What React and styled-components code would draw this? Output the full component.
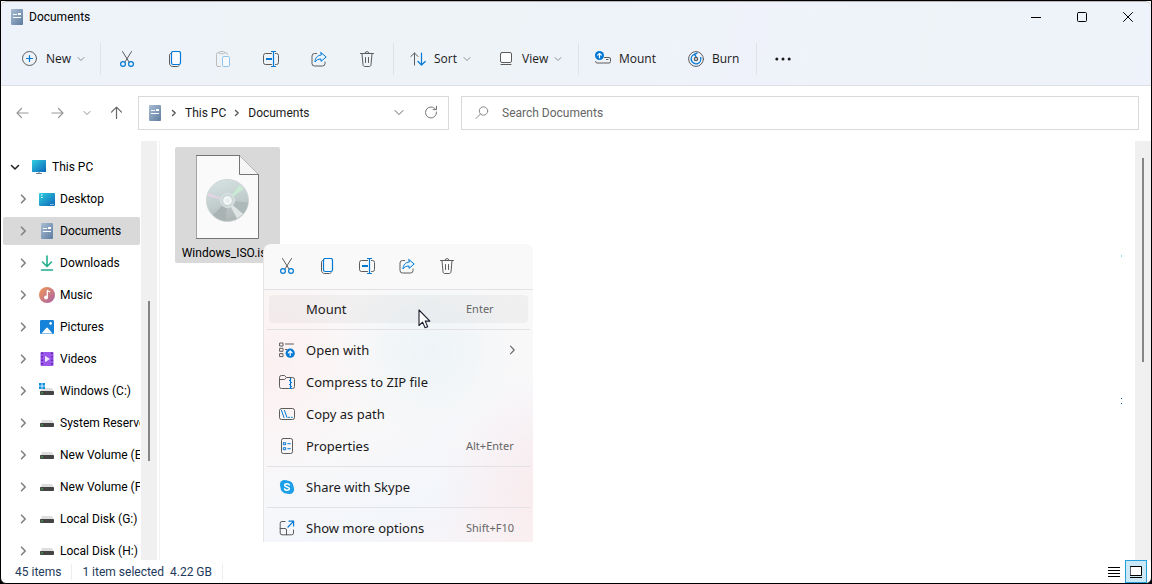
import React from "react";
import styled, { createGlobalStyle, css } from "styled-components";

const GlobalStyle = createGlobalStyle`
  * {
    box-sizing: border-box;
  }

  body {
    margin: 0;
    background: #000;
    color: #000;
    font-family: Roboto, "Open Sans", sans-serif;
    font-size: 12px;
    line-height: 16px;
  }

  button,
  input {
    margin: 0;
    padding: 0;
    border: 0;
    background: none;
    color: inherit;
    font: inherit;
  }
`;

/* ---------- icons ---------- */

const Svg = ({ w = 16, h = 16, children }) => (
  <svg
    width={w}
    height={h}
    viewBox={`0 0 ${w} ${h}`}
    fill="none"
    stroke="#5c5c5c"
    strokeLinecap="round"
    strokeLinejoin="round"
    aria-hidden="true"
  >
    {children}
  </svg>
);

const BLUE = "#0078d4";

const ChevronDown = () => (
  <Svg w={8} h={8}>
    <path d="M1 2.5 4 5.5 7 2.5" stroke="#8f8f8f" />
  </Svg>
);

const ChevronRight = ({ color = "#808080", width = 1.6 }) => (
  <Svg w={8} h={10}>
    <path d="M2.5 1.2 6.2 5 2.5 8.8" stroke={color} strokeWidth={width} />
  </Svg>
);

const CrumbChevron = () => (
  <Svg w={6} h={8}>
    <path d="M1.5 1.5 4.2 4 1.5 6.5" stroke="#555" strokeWidth="1.4" />
  </Svg>
);

const DocIcon = () => (
  <Svg>
    <defs>
      <linearGradient id="doc" x1="0" y1="0" x2="1" y2="1">
        <stop offset="0" stopColor="#a9bdd4" />
        <stop offset="1" stopColor="#5d7c9f" />
      </linearGradient>
    </defs>
    <rect x="2" y="0" width="12" height="16" rx="1" fill="url(#doc)" stroke="none" />
    <path d="M4 5.5h4M4 8.5h8" stroke="#fff" strokeWidth="1.2" strokeLinecap="butt" />
    <rect x="9" y="4" width="3" height="2" fill="#fff" stroke="none" />
  </Svg>
);

const NewIcon = () => (
  <Svg>
    <circle cx="7.5" cy="7.5" r="7" />
    <path d="M7.5 4.5v6M4.5 7.5h6" stroke={BLUE} strokeWidth="1.2" />
  </Svg>
);

const CutIcon = () => (
  <Svg>
    <path d="M3.5 .5 10 11M12.5 .5 6 11" />
    <circle cx="4" cy="13" r="2.4" stroke={BLUE} strokeWidth="1.2" />
    <circle cx="12" cy="13" r="2.4" stroke={BLUE} strokeWidth="1.2" />
  </Svg>
);

const CopyIcon = () => (
  <Svg>
    <path d="M3.6 2.5c-.7.2-1.1.8-1.1 1.6V12c0 2.2 1.2 3.5 3.4 3.5h4.6c.7 0 1.3-.3 1.6-.9" />
    <rect x="4.5" y=".5" width="9" height="13" rx="1.8" fill="#f7fbfe" stroke={BLUE} strokeWidth="1.2" />
  </Svg>
);

const PasteIcon = () => (
  <Svg>
    <path d="M5.5 15.5H3a1.5 1.5 0 0 1-1.5-1.5V3.3A1.5 1.5 0 0 1 3 1.8h1.5M9.5 1.8H11a1.5 1.5 0 0 1 1.5 1.5" stroke="#bcbcbc" />
    <rect x="4.5" y=".5" width="5" height="2.2" rx="1" stroke="#bcbcbc" />
    <rect x="7.5" y="5.5" width="7" height="10" rx="1.2" fill="#f6faff" stroke="#90c4ee" />
  </Svg>
);

const RenameIcon = () => (
  <Svg>
    <path d="M8.5 2.5h-6a2 2 0 0 0-2 2v7a2 2 0 0 0 2 2h6M12.5 2.5h1a2 2 0 0 1 2 2v7a2 2 0 0 1-2 2h-1" />
    <path d="M8.5 .5h4M8.5 15.5h4M10.5 .5v15" stroke={BLUE} strokeWidth="1.2" />
    <path d="M3 8h6" stroke={BLUE} strokeWidth="2" strokeLinecap="butt" />
  </Svg>
);

const ShareIcon = () => (
  <Svg>
    <path d="M5.5 2.5h-2A2.5 2.5 0 0 0 1 5v7.5A2.5 2.5 0 0 0 3.5 15h8a2.5 2.5 0 0 0 2.5-2.5V11" />
    <path d="M10 1.6 15.2 6 10 10.4V8C7.2 8 5.3 9 4 11 4 7.2 6.3 4.3 10 4z" fill="#eaf5fd" stroke={BLUE} />
  </Svg>
);

const TrashIcon = () => (
  <Svg>
    <path d="M1.5 2.5h13M3 2.8l1 11c.1 1 .8 1.7 1.8 1.7h4.4c1 0 1.7-.7 1.8-1.7l1-11M6 2.3a2 1.7 0 0 1 4 0" />
    <path d="M6.5 6.5v5M9.5 6.5v5" />
  </Svg>
);

const SortIcon = () => (
  <Svg>
    <path d="M4.5 14V2M.8 5.5 4.5 2 8 5.5" />
    <path d="M11.5 2v12M8 10.5 11.5 14 15.2 10.5" stroke={BLUE} strokeWidth="1.2" />
  </Svg>
);

const ViewIcon = () => (
  <Svg>
    <rect x="2.5" y="1.5" width="11" height="10" rx="1.5" fill="#fafcfd" />
    <path d="M3 13.5h10" />
  </Svg>
);

const MountIcon = () => (
  <Svg>
    <path d="M9.5 6.5H14A1.5 1.5 0 0 1 15.5 8v2.5A1.5 1.5 0 0 1 14 12H2a1.500 1.500 0 0 1-1.400-1.500" />
    <path d="M11.5 8.5H13" />
    <circle cx="4.5" cy="4.5" r="4.5" fill={BLUE} stroke="none" />
    <path d="M4.5 6.8V2.5M2.7 4.2 4.5 2.4 6.3 4.2" stroke="#fff" strokeWidth="1.2" />
  </Svg>
);

const BurnIcon = () => (
  <Svg>
    <circle cx="8" cy="8" r="7.4" />
    <circle cx="8" cy="8" r="1.6" strokeWidth="1.4" />
    <path d="M6.5 3.4A4.8 4.8 0 1 0 12.6 6.5" stroke={BLUE} strokeWidth="1.3" />
    <path d="M9 2.2 6.5 3.4 8 5.6" stroke={BLUE} strokeWidth="1.3" />
  </Svg>
);

const MoreIcon = () => (
  <Svg>
    <g fill="#1a1a1a" stroke="none">
      <circle cx="1.8" cy="8" r="1.5" />
      <circle cx="8" cy="8" r="1.5" />
      <circle cx="14.2" cy="8" r="1.5" />
    </g>
  </Svg>
);

const arrows = {
  left: "M13 8H2M6.5 3.5 2 8 6.5 12.5",
  right: "M2 8h11M8.5 3.5 13 8 8.5 12.5",
  up: "M7.5 13.5v-11M2.5 7.2 7.5 2.2 12.5 7.2",
};

const ArrowIcon = ({ dir, color = "#999" }) => (
  <Svg>
    <path d={arrows[dir]} stroke={color} strokeWidth="1.2" />
  </Svg>
);

const RefreshIcon = () => (
  <Svg>
    <path d="M13.5 7a5.5 5.5 0 1 1-1.8-3.6L13 4.6M13.5 1.2v3.4h-3.4" stroke="#777" />
  </Svg>
);

const SearchIcon = () => (
  <Svg>
    <circle cx="9.5" cy="6" r="4.2" stroke="#888" />
    <path d="M6.5 9 2 13.5" stroke="#888" />
  </Svg>
);

const PcIcon = () => (
  <Svg>
    <defs>
      <linearGradient id="screen" x1="0" y1="0" x2="1" y2="1">
        <stop offset="0" stopColor="#31cfe0" />
        <stop offset="1" stopColor="#0c65b8" />
      </linearGradient>
    </defs>
    <rect x="1" y="1" width="14" height="12" rx=".6" fill="url(#screen)" stroke="none" />
    <path d="M8 13v1.5M5 14.5h6" stroke="#6d7f8c" strokeLinecap="butt" />
  </Svg>
);

const DesktopIcon = () => (
  <Svg>
    <rect x="0" y="2" width="16" height="13" rx="1" fill="url(#screen)" stroke="none" />
    <path d="M2 4h1.5M2 6.5h1.5M11.5 13.5h1M13.5 13.5h1" stroke="#fff" strokeLinecap="butt" />
  </Svg>
);

const DownloadIcon = () => (
  <Svg>
    <path d="M8 1v10M3.5 7 8 11.5 12.5 7" stroke="#23b08d" strokeWidth="1.6" />
    <path d="M2.5 15h11" stroke="#1fa98f" strokeWidth="1.6" />
  </Svg>
);

const MusicIcon = () => (
  <Svg>
    <defs>
      <linearGradient id="music" x1="0" y1="0" x2="1" y2="1">
        <stop offset="0" stopColor="#f39a56" />
        <stop offset="1" stopColor="#a85fa8" />
      </linearGradient>
    </defs>
    <circle cx="8" cy="8" r="8" fill="url(#music)" stroke="none" />
    <circle cx="7" cy="10.5" r="1.9" fill="#fff" stroke="none" />
    <path d="M8.3 10.5v-7l2.4 1.3" stroke="#fff" strokeWidth="1.3" />
  </Svg>
);

const PicturesIcon = () => (
  <Svg>
    <rect x="1" y="1" width="14" height="14" rx="1.2" fill="#1583da" stroke="none" />
    <path d="M2.5 14.6 7.2 9q.8-.8 1.6 0l4.7 5.6z" fill="#fff" stroke="none" />
    <circle cx="11.6" cy="4.4" r="1.3" fill="#fff" stroke="none" />
  </Svg>
);

const VideosIcon = () => (
  <Svg>
    <rect x="1.5" y="1" width="13" height="14" rx="1" fill="#9a55ea" stroke="none" />
    <path d="M3 1.5v13M13 1.5v13" stroke="#54219c" strokeWidth="1.5" strokeDasharray="1.5 2" strokeLinecap="butt" />
    <path d="M6 4.8v6.4L11 8z" fill="#eee6fb" stroke="none" />
  </Svg>
);

const DriveIcon = ({ system }) => (
  <Svg>
    <path d="M3 5h10l2 4H1z" fill="#dcdee0" stroke="none" />
    <rect x="1" y="8" width="14" height="4" rx=".8" fill="#444" stroke="none" />
    <circle cx="3" cy="10" r=".8" fill="#41d04c" stroke="none" />
    {system && (
      <g stroke="none" fill="#0d8fe0">
        <rect x="0" y="0" width="2.6" height="2.6" />
        <rect x="3.4" y="0" width="2.6" height="2.6" />
        <rect x="0" y="3.4" width="2.6" height="2.6" />
        <rect x="3.4" y="3.4" width="2.6" height="2.6" />
      </g>
    )}
  </Svg>
);

const OpenWithIcon = () => (
  <Svg>
    <rect x="1" y="1" width="3" height="3" />
    <rect x="1" y="6.3" width="3" height="3" />
    <rect x="1" y="11.6" width="3" height="3" />
    <path d="M6.5 2h8M6.5 7.5H8" />
    <circle cx="11.2" cy="11.2" r="4.6" fill={BLUE} stroke="none" />
    <path d="M11.2 13.5V9M9.3 10.8 11.2 8.9 13.1 10.8" stroke="#fff" strokeWidth="1.2" />
  </Svg>
);

const ZipIcon = () => (
  <Svg>
    <path d="M9.5 14.5h-7a2 2 0 0 1-2-2v-9a2 2 0 0 1 2-2h3l2 2h6a2 2 0 0 1 2 2v7a2 2 0 0 1-2 2h-.5M.5 5.5h5l2-2" />
    <path d="M11.5 4v10.5" stroke={BLUE} strokeWidth="1.2" strokeLinecap="butt" />
    <path d="M10 6.5h1.5M11.5 8.5H13M10 10.5h1.5M11.5 12.5H13M10 14.5h3" stroke={BLUE} strokeLinecap="butt" />
  </Svg>
);

const PathIcon = () => (
  <Svg>
    <rect x=".5" y="2.5" width="15" height="11" rx="2" />
    <path d="M2.5 4.5 5 11.5M5.5 4.5 8 11.5M9.5 11.3h1M12.3 11.3h1" stroke={BLUE} />
  </Svg>
);

const PropertiesIcon = () => (
  <Svg>
    <rect x="2.5" y=".5" width="11" height="15" rx="1.8" />
    <rect x="4.7" y="4.7" width="2" height="2" stroke={BLUE} />
    <rect x="4.7" y="9.7" width="2" height="2" stroke={BLUE} />
    <path d="M8.8 5.7h2.5M8.8 10.7h2.5" stroke={BLUE} />
  </Svg>
);

const SkypeIcon = () => (
  <Svg>
    <g fill="#1c9fe8" stroke="none">
      <circle cx="5.5" cy="5.5" r="4.6" />
      <circle cx="10.5" cy="10.5" r="4.6" />
      <circle cx="8" cy="8" r="6.6" />
    </g>
    <path
      d="M10.4 5.9C9.9 5 8.9 4.7 8 4.7c-1.3 0-2.3.6-2.3 1.6 0 2.3 4.7 1 4.7 3.3 0 1.1-1.1 1.7-2.4 1.7-1.1 0-2.1-.4-2.5-1.4"
      stroke="#fff"
      strokeWidth="1.5"
    />
  </Svg>
);

const MoreOptionsIcon = () => (
  <Svg>
    <path d="M6 1.5H3a1.800 1.800 0 0 0-1.800 1.800V13A1.800 1.800 0 0 0 3 14.800h9.700a1.800 1.800 0 0 0 1.800-1.800v-3M1.200 8.500H6A1.500 1.500 0 0 1 7.500 10v4.800" />
    <path d="M9 7 14.5 1.3M10 1.2h4.6V6" stroke={BLUE} strokeWidth="1.2" />
  </Svg>
);

const DiscFileIcon = () => (
  <Svg w={64} h={84}>
    <defs>
      <linearGradient id="disc" x1=".3" y1="0" x2=".6" y2="1">
        <stop offset="0" stopColor="#d6e1e1" />
        <stop offset=".5" stopColor="#c3cfcf" />
        <stop offset="1" stopColor="#adb3b3" />
      </linearGradient>
    </defs>
    <path d="M.5 .5h43l19 19v64H.5z" fill="#fafafa" stroke="#747474" />
    <path d="M43.5 .5v19h19" fill="#f6f6f6" stroke="#747474" />
    <circle cx="31.5" cy="45.5" r="21" fill="url(#disc)" stroke="#ccd4d4" />
    <g stroke="none">
      <path d="M31.5 45.5 43.5 30 48 34z" fill="#c9e9d4" />
      <path d="M31.5 45.5 11.5 41 12.5 38z" fill="#e6d3e6" />
      <path d="M31.5 45.5 17 60A20.5 20.5 0 0 0 29.5 66z" fill="#a9b3b3" />
      <path d="M31.5 45.5 52 47.5A20.5 20.5 0 0 1 47 59z" fill="#adb8b8" />
      <path d="M31.5 45.5 41 63.5 47 59z" fill="#dfe4e4" />
    </g>
    <circle cx="31.5" cy="45.5" r="7" fill="#ccd7d7" stroke="#dfe6e6" />
    <circle cx="31.5" cy="45.5" r="3.5" fill="#e9eeee" stroke="#f8fafa" strokeWidth="1.5" />
  </Svg>
);

const CursorIcon = () => (
  <svg width="13" height="20" viewBox="0 0 13 20" aria-hidden="true">
    <path
      d="M1 1v15.5l3.6-3.4 2.5 5.7 2.6-1.1-2.5-5.6h4.7z"
      fill="#fff"
      stroke="#1b1b2b"
      strokeWidth="1.1"
      strokeLinejoin="round"
    />
  </svg>
);

/* ---------- data ---------- */

const drives = ["System Reserved", "New Volume (E:)", "New Volume (F:)", "Local Disk (G:)", "Local Disk (H:)"];

const places = [
  { name: "Desktop", icon: <DesktopIcon /> },
  { name: "Documents", icon: <DocIcon />, selected: true },
  { name: "Downloads", icon: <DownloadIcon /> },
  { name: "Music", icon: <MusicIcon /> },
  { name: "Pictures", icon: <PicturesIcon /> },
  { name: "Videos", icon: <VideosIcon /> },
  { name: "Windows (C:)", icon: <DriveIcon system /> },
  ...drives.map((name) => ({ name, icon: <DriveIcon /> })),
];

const menuGroups = [
  [{ name: "Mount", keys: "Enter", active: true }],
  [
    { name: "Open with", icon: <OpenWithIcon />, sub: true },
    { name: "Compress to ZIP file", icon: <ZipIcon /> },
    { name: "Copy as path", icon: <PathIcon /> },
    { name: "Properties", icon: <PropertiesIcon />, keys: "Alt+Enter" },
  ],
  [{ name: "Share with Skype", icon: <SkypeIcon /> }],
  [{ name: "Show more options", icon: <MoreOptionsIcon />, keys: "Shift+F10" }],
];

/* ---------- components ---------- */

const ContextMenu = () => (
  <Menu role="menu">
    <QuickActions>
      <QuickButton aria-label="Cut"><CutIcon /></QuickButton>
      <QuickButton aria-label="Copy"><CopyIcon /></QuickButton>
      <QuickButton aria-label="Rename"><RenameIcon /></QuickButton>
      <QuickButton aria-label="Share"><ShareIcon /></QuickButton>
      <QuickButton aria-label="Delete"><TrashIcon /></QuickButton>
    </QuickActions>
    {menuGroups.map((group) => (
      <MenuGroup key={group[0].name}>
        {group.map((item) => (
          <MenuItem key={item.name} role="menuitem" $active={item.active}>
            <MenuIcon>{item.icon}</MenuIcon>
            <MenuLabel>{item.name}</MenuLabel>
            {item.keys && <Keys>{item.keys}</Keys>}
            {item.sub && (
              <SubMark>
                <ChevronRight color="#666" width={1.1} />
              </SubMark>
            )}
          </MenuItem>
        ))}
      </MenuGroup>
    ))}
    <Cursor>
      <CursorIcon />
    </Cursor>
  </Menu>
);

export default function App() {
  return (
    <>
      <GlobalStyle />
      <Window>
        <Header>
          <TitleBar>
            <DocIcon />
            <Title>Documents</Title>
            <Caption aria-label="Minimize">
              <Svg w={10} h={10}><path d="M0 5.5h10" stroke="#000" strokeLinecap="butt" /></Svg>
            </Caption>
            <Caption aria-label="Maximize">
              <Svg w={10} h={10}><rect x=".5" y=".5" width="9" height="9" rx="1" stroke="#000" /></Svg>
            </Caption>
            <Caption aria-label="Close">
              <Svg w={10} h={10}><path d="M.5 .5l9 9M9.5 .5l-9 9" stroke="#000" /></Svg>
            </Caption>
          </TitleBar>
          <Toolbar>
            <ToolButton $width={90}><NewIcon />New<Drop><ChevronDown /></Drop></ToolButton>
            <Divider />
            <IconButton aria-label="Cut"><CutIcon /></IconButton>
            <IconButton aria-label="Copy"><CopyIcon /></IconButton>
            <IconButton aria-label="Paste" disabled><PasteIcon /></IconButton>
            <IconButton aria-label="Rename"><RenameIcon /></IconButton>
            <IconButton aria-label="Share"><ShareIcon /></IconButton>
            <IconButton aria-label="Delete"><TrashIcon /></IconButton>
            <Divider />
            <ToolButton $width={88}><SortIcon />Sort<Drop><ChevronDown /></Drop></ToolButton>
            <ToolButton $width={92}><ViewIcon />View<Drop><ChevronDown /></Drop></ToolButton>
            <Divider />
            <ToolButton $width={93}><MountIcon />Mount</ToolButton>
            <ToolButton $width={80}><BurnIcon />Burn</ToolButton>
            <Divider />
            <IconButton aria-label="See more"><MoreIcon /></IconButton>
          </Toolbar>
        </Header>

        <AddressRow>
          <NavButtons>
            <NavButton aria-label="Back"><ArrowIcon dir="left" /></NavButton>
            <NavButton aria-label="Forward"><ArrowIcon dir="right" /></NavButton>
            <NavButton aria-label="Recent locations" $narrow><ChevronDown /></NavButton>
            <NavButton aria-label="Up"><ArrowIcon dir="up" color="#666" /></NavButton>
          </NavButtons>
          <Fields>
            <AddressBar>
              <DocIcon />
              <CrumbChevron />
              <Crumb href="#this-pc">This PC</Crumb>
              <CrumbChevron />
              <Crumb href="#documents">Documents</Crumb>
              <AddressButton aria-label="Previous locations">
                <Svg w={10} h={10}><path d="M1 2.5 5 6.5 9 2.5" stroke="#666" /></Svg>
              </AddressButton>
              <AddressButton aria-label="Refresh"><RefreshIcon /></AddressButton>
            </AddressBar>
            <SearchBox>
              <SearchIcon />
              <SearchInput type="text" aria-label="Search" placeholder="Search Documents" />
            </SearchBox>
          </Fields>
        </AddressRow>

        <Body>
          <Sidebar>
            <Place $root>
              <ChevronWrap>
                <Svg w={10} h={10}><path d="M1.5 3.5 5 7 8.5 3.5" stroke="#222" strokeWidth="1.5" /></Svg>
              </ChevronWrap>
              <PcIcon />
              <PlaceName>This PC</PlaceName>
            </Place>
            {places.map((place) => (
              <Place key={place.name} $selected={place.selected}>
                <ChevronWrap><ChevronRight /></ChevronWrap>
                {place.icon}
                <PlaceName>{place.name}</PlaceName>
              </Place>
            ))}
          </Sidebar>
          <ScrollTrack $before={160} $size={160} $after={99}>
            <ScrollThumb />
          </ScrollTrack>
          <Content>
            <FileTile>
              <DiscFileIcon />
              <FileName>Windows_ISO.iso</FileName>
              <ContextMenu />
            </FileTile>
            <Speck $top={114} $height={2} $color="#9cd6ee" />
            <Speck $top={257} $height={1} $color="#14608a" />
            <Speck $top={262} $height={1} $color="#14608a" />
          </Content>
          <ScrollTrack $before={17} $size={204} $after={198}>
            <ScrollThumb />
          </ScrollTrack>
        </Body>

        <StatusBar>
          <StatusCell>45 items</StatusCell>
          <StatusCell>
            <span>1 item selected</span>
            <span>4.22 GB</span>
          </StatusCell>
          <ViewToggles>
            <ViewToggle aria-label="Details view">
              <Svg w={12} h={12}>
                <path d="M0 1.5h12M0 4.5h12M0 7.5h12M0 10.5h12" stroke="#000" strokeLinecap="butt" />
              </Svg>
            </ViewToggle>
            <ViewToggle aria-label="Large icons view" $on>
              <Svg w={12} h={12}>
                <rect x=".5" y=".5" width="11" height="9" fill="#fff" stroke="#000" />
                <path d="M0 11.5h12" stroke="#000" strokeLinecap="butt" />
              </Svg>
            </ViewToggle>
          </ViewToggles>
        </StatusBar>
      </Window>
    </>
  );
}

const Window = styled.div`
  display: flex;
  flex-direction: column;
  height: 100vh;
  border: 1px solid #000;
  border-radius: 0 0 6px 6px;
  background: #fff;
  overflow: hidden;

  svg {
    flex: none;
    display: block;
  }
`;

const Header = styled.header`
  flex: none;
  border-top: 1px solid #b9b3b8;
  border-bottom: 1px solid #dcdfe3;
  border-radius: 6px 6px 0 0;
  background: linear-gradient(100deg, #eef2fa 0%, #eef3f8 20%, #eef3f8 45%, #eff2fa 65%, #eef3f8 80%, #eef2fa 100%);
`;

const TitleBar = styled.div`
  display: flex;
  align-items: center;
  height: 30px;
  padding-left: 8px;
`;

const Title = styled.h1`
  flex: 1;
  margin: 0 0 0 4px;
  font-size: 12px;
  font-weight: 400;
`;

const Caption = styled.button`
  display: flex;
  align-items: center;
  justify-content: center;
  width: 46px;
  height: 28px;
`;

const Toolbar = styled.div`
  display: flex;
  align-items: center;
  height: 53px;
  padding: 1px 0 0 7px;
`;

const ToolButton = styled.button`
  display: flex;
  align-items: center;
  gap: 8px;
  width: ${({ $width }) => $width}px;
  height: 36px;
  padding-left: 14px;
  color: #1a1a1a;
  font-family: "Open Sans", "Noto Sans", sans-serif;
`;

const Drop = styled.span`
  margin-left: -2px;
`;

const Divider = styled.span`
  width: 1px;
  height: 32px;
  margin: 0 2px;
  background: #dfe2e6;
`;

const IconButton = styled.button`
  display: flex;
  align-items: center;
  justify-content: center;
  width: 48px;
  height: 36px;
`;

const AddressRow = styled.div`
  display: flex;
  flex: none;
  height: 55px;
  padding: 10px 12px 11px 0;
`;

const NavButtons = styled.nav`
  display: flex;
  flex: none;
  align-items: center;
  width: 137px;
  padding-left: 4px;
`;

const NavButton = styled.button`
  display: flex;
  align-items: center;
  justify-content: center;
  width: ${({ $narrow }) => ($narrow ? 24 : 35)}px;
  height: 32px;
`;

const Fields = styled.div`
  display: grid;
  flex: 1;
  grid-template-columns: 311fr 678fr;
  gap: 12px;
`;

const field = css`
  display: flex;
  align-items: center;
  min-width: 0;
  height: 34px;
  border: 1px solid #d9d9d9;
  background: #fff;
`;

const AddressBar = styled.div`
  ${field}
  gap: 8px;
  padding: 0 5px 0 8px;
`;

const Crumb = styled.a`
  color: #1a1a1a;
  text-decoration: none;
  white-space: nowrap;
`;

const AddressButton = styled.button`
  display: flex;
  align-items: center;
  justify-content: center;
  width: 24px;
  height: 32px;

  &:first-of-type {
    margin-left: auto;
  }
`;

const SearchBox = styled.label`
  ${field}
  gap: 12px;
  padding: 0 12px;
`;

const SearchInput = styled.input`
  flex: 1;
  min-width: 0;
  outline: none;

  &::placeholder {
    color: #666;
    opacity: 1;
  }
`;

const Body = styled.div`
  display: flex;
  flex: 1;
  min-height: 0;
`;

const Sidebar = styled.aside`
  flex: none;
  width: 140px;
  padding: 12px 1px 0 2px;
  overflow: hidden;
`;

const Place = styled.div`
  display: flex;
  align-items: center;
  height: 28px;
  margin-bottom: 4px;
  padding-left: ${({ $root }) => ($root ? 4 : 12)}px;
  border-radius: 2px;
  background: ${({ $selected }) => ($selected ? "#d9d9d9" : "transparent")};
`;

const ChevronWrap = styled.span`
  display: flex;
  flex: none;
  justify-content: center;
  width: 16px;
  margin-right: 8px;
`;

const PlaceName = styled.span`
  margin-left: 5px;
  overflow: hidden;
  white-space: nowrap;
`;

const ScrollTrack = styled.div`
  display: grid;
  flex: none;
  grid-template-rows: ${({ $before, $size, $after }) => `${$before}fr ${$size}fr ${$after}fr`};
  justify-content: center;
  width: 16px;
  background: #f0f0f0;
`;

const ScrollThumb = styled.div`
  grid-row: 2;
  width: 2px;
  background: #858585;
`;

const Content = styled.main`
  position: relative;
  flex: 1;
  min-width: 0;
  margin-left: 2px;
  padding: 6px 15px;
  border-left: 1px solid #f2f2f2;
`;

const Speck = styled.span`
  position: absolute;
  top: ${({ $top }) => $top}px;
  right: 13px;
  width: 1px;
  height: ${({ $height }) => $height}px;
  background: ${({ $color }) => $color};
`;

const FileTile = styled.div`
  position: relative;
  display: flex;
  flex-direction: column;
  align-items: center;
  width: 105px;
  padding: 8px 0 2px;
  border-radius: 2px;
  background: #d9d9d9;
`;

const FileName = styled.span`
  margin-top: 6px;
  white-space: nowrap;
`;

const Menu = styled.div`
  position: absolute;
  top: 97px;
  left: 88px;
  width: 270px;
  border-left: 1px solid #e6e6e6;
  border-radius: 8px 8px 0 0;
  color: #1a1a1a;
  font-family: "Noto Sans", "Open Sans", sans-serif;
  background: radial-gradient(circle at 62% 36%, #edf4f7 0, rgba(240, 246, 250, 0) 36%),
    radial-gradient(circle at 105% 82%, #faebed 0, rgba(251, 236, 238, 0) 30%),
    radial-gradient(circle at 0 40%, #fcf0f1 0, rgba(252, 240, 240, 0) 36%),
    linear-gradient(160deg, #faf9f9, #f9f8f9 55%, #f3f6fb 80%, #f9f3f5);
`;

const QuickActions = styled.div`
  display: flex;
  align-items: center;
  height: 45px;
  padding: 0 0 2px 3px;
  border-radius: 8px 8px 0 0;
  background: #f9f9f9;
`;

const QuickButton = styled.button`
  display: flex;
  align-items: center;
  justify-content: center;
  width: 40px;
  height: 32px;
`;

const MenuGroup = styled.div`
  display: flex;
  flex-direction: column;
  gap: 4px;
  margin: 0 3px;
  padding: 6px 2px;
  border-top: 1px solid #e3e1e3;

  &:nth-child(2) {
    margin: 0;
    padding: 5px 5px 6px;
  }

  &:nth-last-child(2) {
    padding-bottom: 0;
  }
`;

const MenuItem = styled.button`
  display: flex;
  align-items: center;
  height: 28px;
  padding-left: 10px;
  border-radius: 4px;
  text-align: left;
  background: ${({ $active }) => ($active ? "rgba(0, 0, 0, 0.035)" : "transparent")};
`;

const MenuIcon = styled.span`
  width: 16px;
  margin-right: 11px;
`;

const MenuLabel = styled.span`
  flex: 1;
  font-size: 13px;
`;

const Keys = styled.span`
  width: 62px;
  color: #666;
  font-size: 11px;
  white-space: nowrap;
`;

const SubMark = styled.span`
  margin-right: 12px;
`;

const Cursor = styled.span`
  position: absolute;
  top: 65px;
  left: 154px;
`;

const StatusBar = styled.footer`
  display: flex;
  flex: none;
  align-items: center;
  height: 23px;
  padding: 0 4px;
  color: #1e395b;
`;

const StatusCell = styled.div`
  display: flex;
  gap: 6px;
  padding: 0 10px;
  border-right: 1px solid #eee;
`;

const ViewToggles = styled.div`
  display: flex;
  margin-left: auto;
`;

const ViewToggle = styled.button`
  display: flex;
  align-items: center;
  justify-content: center;
  width: 22px;
  height: 23px;
  border: 1px solid ${({ $on }) => ($on ? "#26a0da" : "transparent")};
  background: ${({ $on }) => ($on ? "#cbe8f6" : "transparent")};
`;
